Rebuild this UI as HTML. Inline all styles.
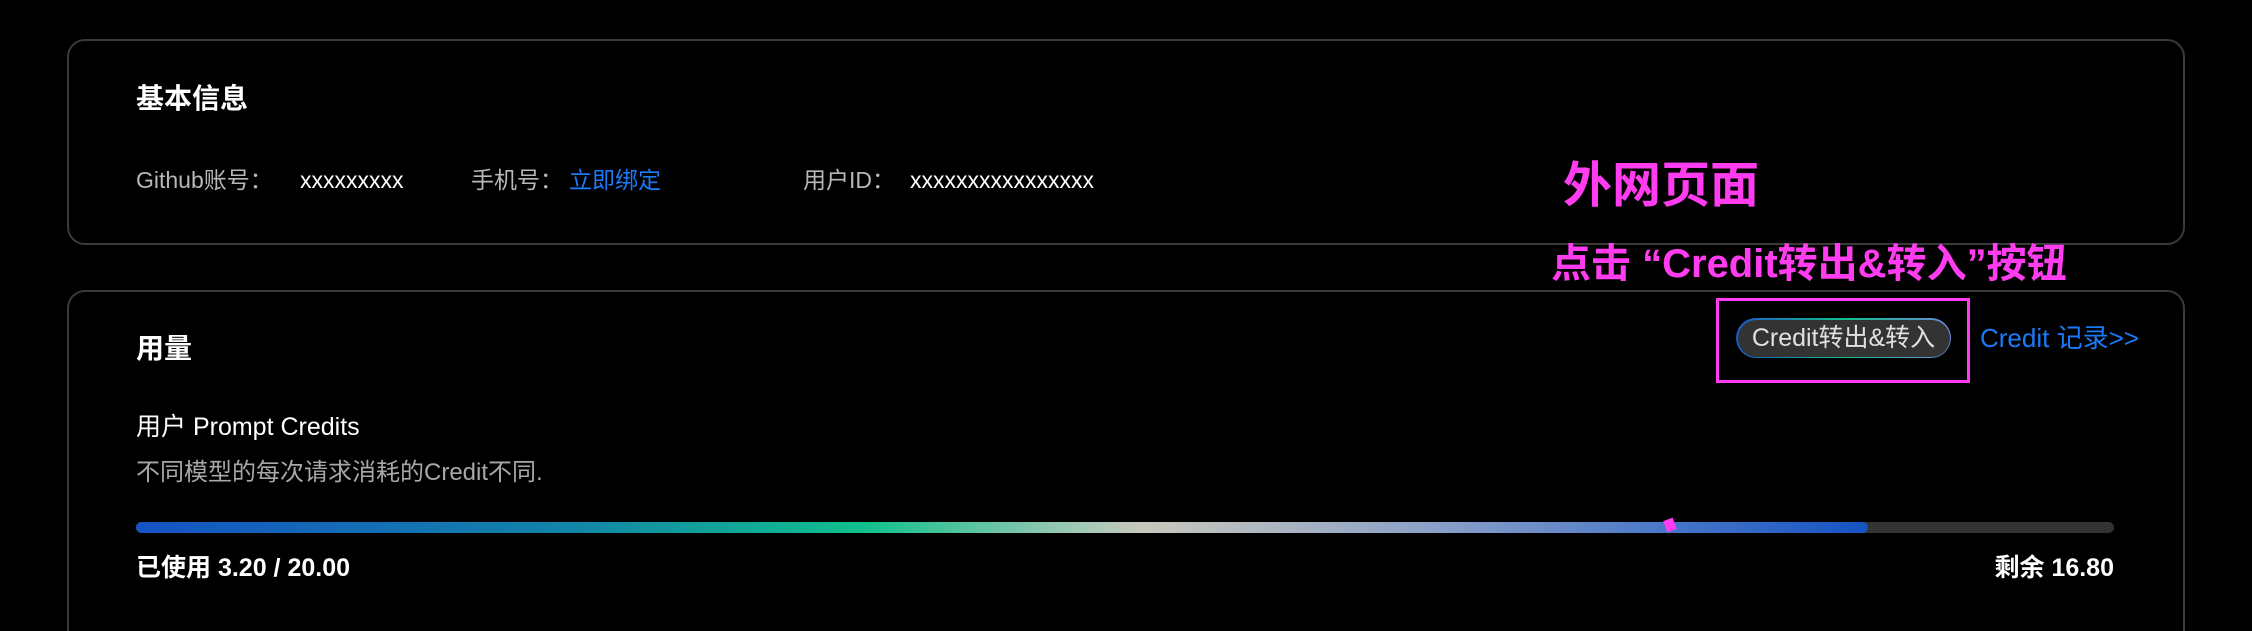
<!DOCTYPE html>
<html style="width:2252px;height:631px;overflow:hidden"><head><meta charset="utf-8"><style>
*{margin:0;padding:0;box-sizing:border-box}
body{width:2252px;height:631px;background:#000;overflow:hidden;position:relative;font-family:"Liberation Sans","Noto Sans CJK SC",sans-serif;color:#fff}
.card{position:absolute;left:67px;width:2118px;border:2px solid #3a3a3a;border-radius:18px}
.t{position:absolute;white-space:nowrap;line-height:1}
.g{color:#b8b8b8}
</style></head><body>
<div class="card" style="top:39px;height:206px"></div>
<div class="card" style="top:290px;height:341px;border-bottom:none;border-radius:18px 18px 0 0"></div>
<div class="t" style="left:136px;top:85px;font-size:28px;font-weight:bold">基本信息</div>
<div class="t g" style="left:136px;top:169px;font-size:23px">Github账号：</div>
<div class="t" style="left:300px;top:169px;font-size:23px">xxxxxxxxx</div>
<div class="t g" style="left:471px;top:169px;font-size:23px">手机号：</div>
<div class="t" style="left:569px;top:169px;font-size:23px;color:#1a7af8">立即绑定</div>
<div class="t g" style="left:803px;top:169px;font-size:23px">用户ID：</div>
<div class="t" style="left:910px;top:169px;font-size:23px">xxxxxxxxxxxxxxxx</div>
<div class="t" style="left:136px;top:335px;font-size:28px;font-weight:bold">用量</div>
<div class="t" style="left:136px;top:415px;font-size:25px">用户 Prompt Credits</div>
<div class="t g" style="left:136px;top:461px;font-size:24px;color:#a8a8a8">不同模型的每次请求消耗的Credit不同.</div>
<div style="position:absolute;left:136px;top:522px;width:1978px;height:11px;border-radius:6px;background:#333"></div>
<div style="position:absolute;left:136px;top:522px;width:1732px;height:11px;border-radius:6px;background:linear-gradient(90deg,#1553c4 0%,#1285a8 25%,#10c08c 42%,#9cc8b4 54%,#c8c8bc 58%,#8aa0c8 75%,#4a78c8 88%,#1553c4 100%)"></div>
<div style="position:absolute;left:1665px;top:519px;width:10px;height:12px;background:#ff3cf0;transform:rotate(-20deg)"></div>
<div class="t" style="left:136px;top:556px;font-size:25px;font-weight:bold">已使用 3.20 / 20.00</div>
<div class="t" style="right:138px;top:556px;font-size:25px;font-weight:bold">剩余 16.80</div>
<div class="t" style="left:1563px;top:162px;font-size:49px;font-weight:bold;color:#ff3cf0">外网页面</div>
<div class="t" style="left:1551px;top:244px;font-size:40px;font-weight:bold;color:#ff3cf0">点击 “Credit转出&amp;转入”按钮</div>
<div style="position:absolute;left:1716px;top:298px;width:254px;height:85px;border:3px solid #ff3cf0"></div>
<div style="position:absolute;left:1736px;top:318px;width:215px;height:40px;border-radius:20px;background:linear-gradient(90deg,#1a5bc8,#10c08c,#6a8ad8);padding:1.5px"><div style="width:100%;height:100%;border-radius:20px;background:#333;color:#e0e0e0;font-size:25px;text-align:center;line-height:37px">Credit转出&amp;转入</div></div>
<div class="t" style="left:1980px;top:325px;font-size:26px;color:#1a7af8">Credit 记录&gt;&gt;</div>
</body></html>
